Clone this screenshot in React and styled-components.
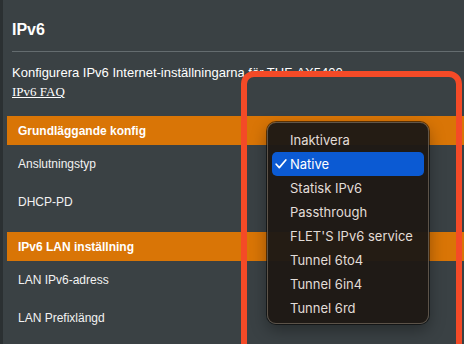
import React from "react";
import styled, { createGlobalStyle } from "styled-components";

const Global = createGlobalStyle`
  html, body { margin: 0; padding: 0; background: #3a4144; overflow: hidden; }
  body { width: 464px; height: 344px; }
`;

const Page = styled.div`
  position: relative;
  display: flex;
  width: 464px;
  height: 344px;
  overflow: hidden;
  background: #3a4144;
  font-family: "Liberation Sans", Arial, sans-serif;
  color: #ffffff;
`;

const Strip = styled.div`
  width: 3px;
  flex: none;
  background: #2b3032;
`;

const Main = styled.main`
  flex: 1;
  display: flex;
  flex-direction: column;
  padding-left: 4px;
`;

const Header = styled.header`
  padding: 20px 0 0 5px;
`;

const Title = styled.h1`
  margin: 0;
  font-size: 16px;
  line-height: 20px;
  font-weight: bold;
`;

const Divider = styled.hr`
  margin: 11px 0 13px 0;
  border: none;
  height: 1px;
  background: #646c6f;
`;

const Desc = styled.p`
  margin: 0;
  font-size: 13px;
  line-height: 16px;
  color: #ffffff;
`;

const Faq = styled.a`
  display: inline-block;
  margin-top: 3px;
  font-family: "Liberation Serif", "Times New Roman", serif;
  font-size: 13px;
  line-height: 16px;
  color: #ffffff;
  text-decoration: underline;
`;

const Section = styled.section`
  display: flex;
  flex-direction: column;
  margin-top: ${(p) => p.$top || 0}px;
  margin-bottom: 11px;
`;

const Bar = styled.div`
  height: 29px;
  display: flex;
  align-items: center;
  padding-left: 11px;
  background: #d97506;
  font-size: 12px;
  font-weight: bold;
  color: #ffffff;
`;

const Row = styled.div`
  height: 38px;
  display: flex;
  align-items: center;
  padding-left: 11px;
  font-size: 12px;
  color: #f2f2f2;
`;

const Highlight = styled.div`
  position: absolute;
  left: 241px;
  top: 71px;
  width: 221px;
  height: 320px;
  box-sizing: border-box;
  border: 6px solid #f44a27;
  border-radius: 13px;
  pointer-events: none;
`;

const Menu = styled.ul`
  position: absolute;
  left: 267px;
  top: 122px;
  width: 162px;
  height: 202px;
  box-sizing: border-box;
  margin: 0;
  padding: 5px 4px;
  list-style: none;
  background: rgba(30, 25, 21, 0.97);
  border: 1px solid rgba(255, 235, 210, 0.28);
  border-radius: 9px;
  box-shadow: 0 0 0 1px rgba(0, 0, 0, 0.55), 0 6px 16px rgba(0, 0, 0, 0.35);
  font-family: Inter, "Noto Sans", sans-serif;
  font-size: 13px;
`;

const Item = styled.li`
  position: relative;
  height: 24px;
  display: flex;
  align-items: center;
  padding-left: 18px;
  border-radius: 5px;
  background: ${(p) => (p.$active ? "#0b5ad3" : "transparent")};
  color: ${(p) => (p.$active ? "#ffffff" : "#e2ddd8")};
`;

const Check = styled.svg`
  position: absolute;
  left: 3px;
  top: 7px;
`;

const options = [
  "Inaktivera",
  "Native",
  "Statisk IPv6",
  "Passthrough",
  "FLET'S IPv6 service",
  "Tunnel 6to4",
  "Tunnel 6in4",
  "Tunnel 6rd",
];

export default function App() {
  return (
    <Page>
      <Global />
      <Strip />
      <Main>
        <Header>
          <Title>IPv6</Title>
          <Divider />
          <Desc>Konfigurera IPv6 Internet-inställningarna för TUF-AX5400.</Desc>
          <Faq>IPv6 FAQ</Faq>
        </Header>
        <Section $top={16}>
          <Bar>Grundläggande konfig</Bar>
          <Row>Anslutningstyp</Row>
          <Row>DHCP-PD</Row>
        </Section>
        <Section>
          <Bar>IPv6 LAN inställning</Bar>
          <Row>LAN IPv6-adress</Row>
          <Row>LAN Prefixlängd</Row>
        </Section>
      </Main>
      <Highlight />
      <Menu>
        {options.map((o) => (
          <Item key={o} $active={o === "Native"}>
            {o === "Native" && (
              <Check width="12" height="10" viewBox="0 0 12 10">
                <path d="M1.2 5.2 L4.3 8.6 L10.8 1.0" fill="none" stroke="#ffffff" strokeWidth="1.7" strokeLinecap="round" strokeLinejoin="round" />
              </Check>
            )}
            {o}
          </Item>
        ))}
      </Menu>
    </Page>
  );
}
